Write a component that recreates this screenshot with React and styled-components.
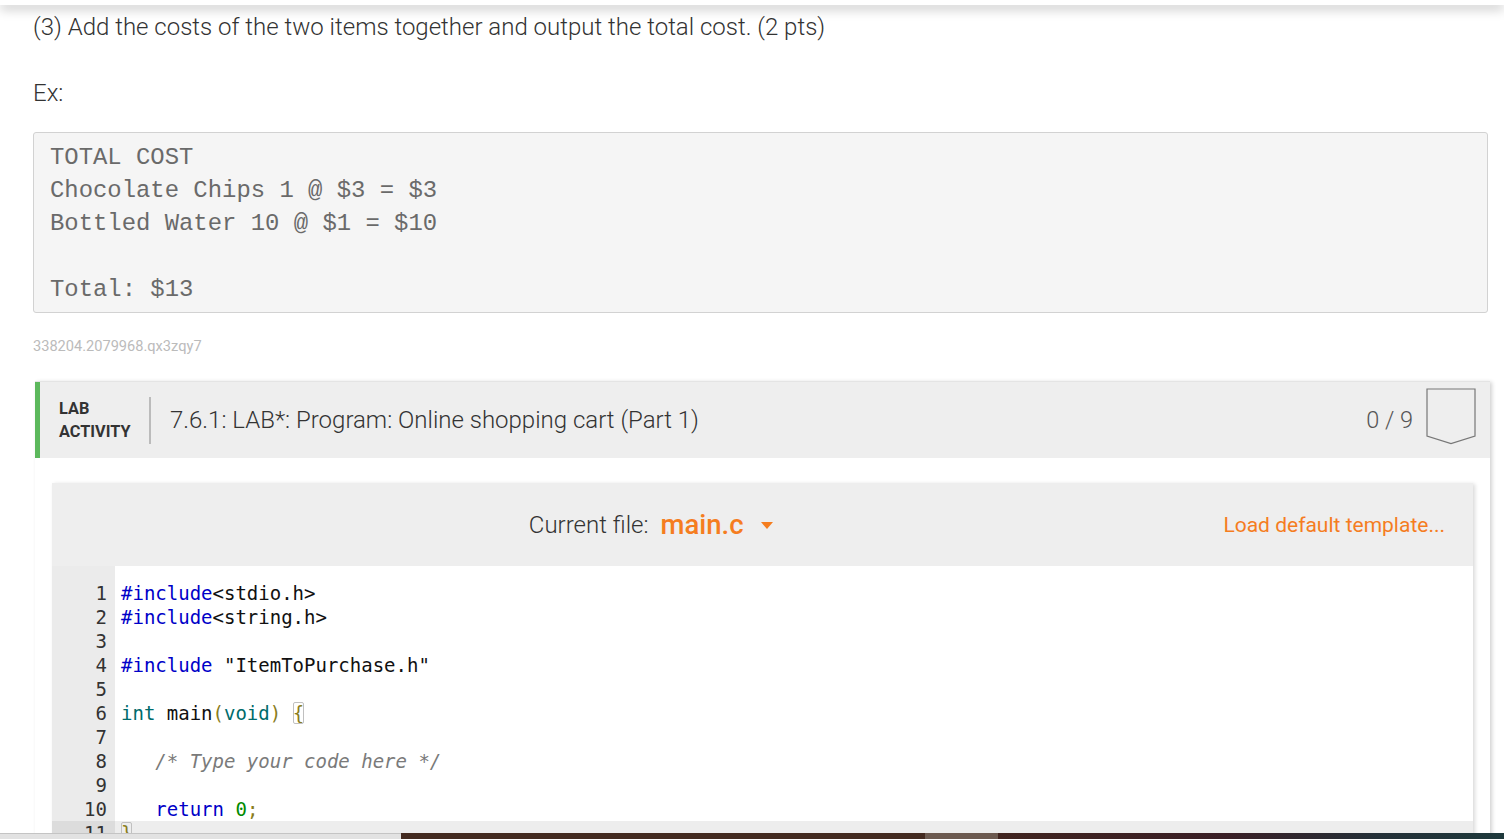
import { createGlobalStyle, styled } from 'styled-components'

const GlobalStyle = createGlobalStyle`
    html, body {
        margin: 0;
        padding: 0;
        background: #fff;
        font-family: Roboto, "Noto Sans", sans-serif;
        color: #333;
    }
`

const code = [
    [['inc', '#include'], ['txt', '<stdio.h>']],
    [['inc', '#include'], ['txt', '<string.h>']],
    [],
    [['inc', '#include'], ['txt', ' "ItemToPurchase.h"']],
    [],
    [['type', 'int'], ['txt', ' main'], ['paren', '('], ['type', 'void'], ['paren', ')'], ['txt', ' '], ['brace', '{']],
    [],
    [['txt', '   '], ['comment', '/* Type your code here */']],
    [],
    [['txt', '   '], ['kw', 'return'], ['txt', ' '], ['num', '0'], ['paren', ';']],
    [['brace', '}']],
]

const tokenColors = {
    inc: '#0000c8',
    txt: '#111',
    type: '#006b6b',
    paren: '#8a7d1c',
    brace: '#8a7d1c',
    comment: '#7a7a7a',
    kw: '#0000c8',
    num: '#008a00',
}

const App = () => {
    return (
        <>
            <GlobalStyle />
            <Page>
                <TopShade />
                <Content>
                    <Prompt>(3) Add the costs of the two items together and output the total cost. (2 pts)</Prompt>
                    <ExLabel>Ex:</ExLabel>
                    <Example>{`TOTAL COST
Chocolate Chips 1 @ $3 = $3
Bottled Water 10 @ $1 = $10

Total: $13`}</Example>
                    <Caption>338204.2079968.qx3zqy7</Caption>

                    <LabBox>
                        <LabHeader>
                            <LabTag>LAB<br />ACTIVITY</LabTag>
                            <Divider />
                            <LabTitle>7.6.1: LAB*: Program: Online shopping cart (Part 1)</LabTitle>
                            <Score>0 / 9</Score>
                            <Badge width="50" height="57" viewBox="0 0 50 57">
                                <path d="M1 1 H49 V48 L25 55.5 L1 48 Z" fill="none" stroke="#777" strokeWidth="1.2" />
                            </Badge>
                        </LabHeader>
                        <LabBody>
                            <Editor>
                                <EditorBar>
                                    <FilePicker>
                                        <FileLabel>Current file:</FileLabel>
                                        <FileName>main.c</FileName>
                                        <Caret />
                                    </FilePicker>
                                    <TemplateLink>Load default template...</TemplateLink>
                                </EditorBar>
                                <CodeArea>
                                    <Gutter>
                                        {code.map((_, i) => (
                                            <LineNo key={i} $active={i === 10}>{i + 1}</LineNo>
                                        ))}
                                    </Gutter>
                                    <Lines>
                                        {code.map((line, i) => (
                                            <CodeLine key={i} $active={i === 10}>
                                                {line.map(([kind, text], j) => (
                                                    <Token key={j} $kind={kind}>{text}</Token>
                                                ))}
                                                {line.length === 0 && '\u00a0'}
                                            </CodeLine>
                                        ))}
                                    </Lines>
                                </CodeArea>
                            </Editor>
                        </LabBody>
                    </LabBox>
                </Content>
                <Taskbar>
                    <TaskLight />
                    <TaskDark />
                    <TaskItem />
                    <TaskFade />
                </Taskbar>
            </Page>
        </>
    )
}

const Page = styled.div`
    height: 100vh;
    display: flex;
    flex-direction: column;
    overflow: hidden;
`

const TopShade = styled.div`
    height: 5px;
    flex: none;
    background: #fff;
    position: relative;
    z-index: 2;
    box-shadow: 0 3px 12px rgba(0, 0, 0, 0.35);
`

const Content = styled.div`
    flex: 1;
    min-height: 0;
    overflow: hidden;
    padding: 9px 16px 0 33px;
`

const Prompt = styled.div`
    font-size: 24px;
    font-weight: 300;
    line-height: 27px;
    color: #333;
`

const ExLabel = styled.div`
    margin-top: 39px;
    font-size: 24px;
    font-weight: 300;
    line-height: 27px;
    color: #333;
`

const Example = styled.pre`
    margin: 25px 0 0;
    padding: 8px 16px 6px;
    background: #f5f5f5;
    border: 1px solid #d2d2d2;
    border-radius: 3px;
    font-family: "Liberation Mono", "Courier New", monospace;
    font-size: 23.9px;
    line-height: 33px;
    color: #6a6a6a;
`

const Caption = styled.div`
    margin-top: 25px;
    font-size: 14.6px;
    line-height: 16px;
    color: #bbb;
`

const LabBox = styled.div`
    margin: 27px -2px 0 2px;
    background: #fff;
    border-top: 1px solid #e4e4e4;
    box-shadow: 2px 1px 4px rgba(0, 0, 0, 0.18);
`

const LabHeader = styled.div`
    height: 76px;
    display: flex;
    align-items: center;
    background: #eee;
    border-left: 5px solid #5cb85c;
    padding: 0 14px 0 19px;
`

const LabTag = styled.div`
    font-size: 16.3px;
    font-weight: 700;
    line-height: 23px;
    color: #333;
    width: 90px;
`

const Divider = styled.div`
    width: 2px;
    height: 47px;
    background: #bbb;
    margin-right: 19px;
`

const LabTitle = styled.div`
    flex: 1;
    font-size: 24px;
    font-weight: 300;
    color: #333;
`

const Score = styled.div`
    font-size: 23.5px;
    font-weight: 300;
    color: #555;
    margin-right: 13px;
`

const Badge = styled.svg`
    display: block;
    align-self: flex-start;
    margin-top: 6px;
`

const LabBody = styled.div`
    padding: 25px 17px 0;
`

const Editor = styled.div`
    box-shadow: 2px 1px 4px rgba(0, 0, 0, 0.15);
`

const EditorBar = styled.div`
    height: 83px;
    display: flex;
    align-items: center;
    background: #eee;
    padding: 0 28px 0 26px;
`

const FilePicker = styled.div`
    flex: 1;
    display: flex;
    align-items: center;
    justify-content: center;
`

const FileLabel = styled.span`
    font-size: 24px;
    font-weight: 300;
    color: #333;
    margin-right: 12px;
`

const FileName = styled.span`
    font-size: 27.5px;
    font-weight: 500;
    color: #f57d1f;
    margin-right: 17px;
`

const Caret = styled.span`
    width: 0;
    height: 0;
    border-left: 6.5px solid transparent;
    border-right: 6.5px solid transparent;
    border-top: 7px solid #f57d1f;
    margin-top: 2px;
`

const TemplateLink = styled.span`
    font-size: 21px;
    color: #f57d1f;
`

const CodeArea = styled.div`
    display: flex;
    background: #fff;
    font-family: "DejaVu Sans Mono", "Liberation Mono", monospace;
    font-size: 19px;
    line-height: 24px;
`

const Gutter = styled.div`
    width: 63px;
    flex: none;
    background: #ebebeb;
    padding-top: 15px;
    text-align: right;
    color: #333;
`

const LineNo = styled.div`
    padding-right: 8px;
    background: ${p => (p.$active ? '#dcdcdc' : 'transparent')};
`

const Lines = styled.div`
    flex: 1;
    padding-top: 15px;
`

const CodeLine = styled.div`
    padding-left: 6px;
    white-space: pre;
    background: ${p => (p.$active ? '#ededed' : 'transparent')};
`

const Token = styled.span`
    color: ${p => tokenColors[p.$kind]};
    font-style: ${p => (p.$kind === 'comment' ? 'italic' : 'normal')};
    ${p => p.$kind === 'brace' && `
        outline: 1px solid #c0c0c0;
        outline-offset: -1px;
        border-radius: 2px;
    `}
`

const Taskbar = styled.div`
    height: 6px;
    flex: none;
    display: flex;
`

const TaskLight = styled.div`
    width: 401px;
    background: #e2e2e2;
    border-top: 1px solid #c4c4c4;
`

const TaskDark = styled.div`
    width: 524px;
    background: #432a20;
`

const TaskItem = styled.div`
    width: 73px;
    background: #6c5a50;
`

const TaskFade = styled.div`
    flex: 1;
    background: linear-gradient(90deg, #40241f 0%, #3a1f26 45%, #243038 75%, #1f3a3c 100%);
`

export default App
